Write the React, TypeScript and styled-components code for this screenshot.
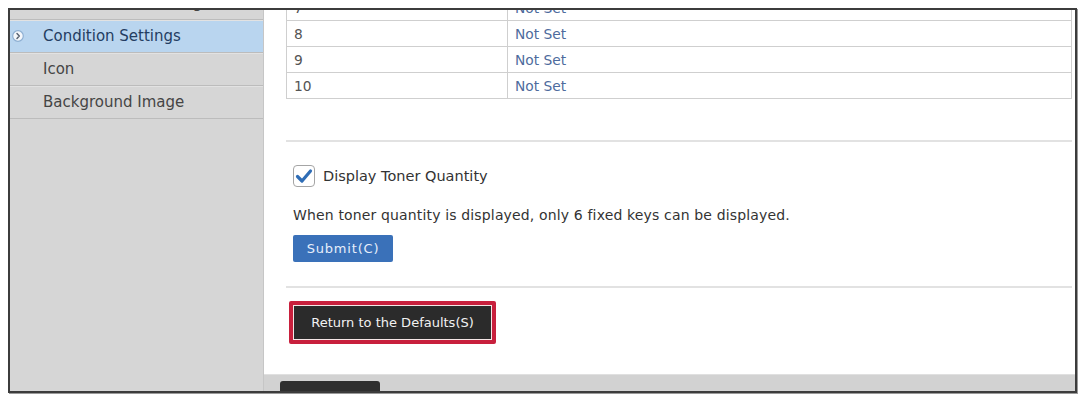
import React from "react";
import styled, { createGlobalStyle } from "styled-components";

const Global = createGlobalStyle`
  html, body { margin: 0; padding: 0; background: #ffffff; }
  body { font-family: "DejaVu Sans", Verdana, sans-serif; }
`;

const Page = styled.div`
  padding: 8px 0 0 8px;
  width: 1079px;
  height: 396px;
  box-sizing: border-box;
  overflow: hidden;
`;

const Frame = styled.div`
  width: 1069px;
  height: 385px;
  box-sizing: border-box;
  border: 2px solid #3c3c3c;
  display: flex;
  overflow: hidden;
  box-shadow: 1px 1px 0 #9a9a9a;
`;

const Sidebar = styled.nav`
  width: 254px;
  flex: none;
  background: #d6d6d6;
  border-right: 1px solid #c6c6c6;
  box-sizing: border-box;
  overflow: hidden;
  display: flex;
  flex-direction: column;
`;

const SideItem = styled.div<{ $active?: boolean }>`
  height: 33px;
  flex: none;
  box-sizing: border-box;
  display: flex;
  align-items: center;
  border-bottom: 1px solid #bcbcbc;
  box-shadow: inset 0 1px 0 #e2e2e2;
  background: ${(p) => (p.$active ? "#b9d5ef" : "transparent")};
  color: ${(p) => (p.$active ? "#243d62" : "#454545")};
  font-size: 15px;
  line-height: 18px;
`;

const ScrolledItem = styled(SideItem)`
  margin-top: -23px;
  align-items: flex-start;
  padding-top: 7px;
`;

const IconSlot = styled.span`
  width: 33px;
  flex: none;
  display: flex;
  align-items: center;
  padding-left: 2px;
  box-sizing: border-box;
`;

const Main = styled.main`
  flex: 1;
  background: #ffffff;
  display: flex;
  flex-direction: column;
  overflow: hidden;
`;

const Content = styled.div`
  padding: 0 3px 0 22px;
  display: flex;
  flex-direction: column;
`;

const Table = styled.table`
  border-collapse: collapse;
  width: 100%;
  margin-top: -16px;
  font-size: 13.8px;
`;

const Cell = styled.td<{ $value?: boolean }>`
  height: 25px;
  padding: 0 0 0 7px;
  border: 1px solid #cfcfcf;
  color: ${(p) => (p.$value ? "#4e6b9d" : "#555555")};
  width: ${(p) => (p.$value ? "auto" : "213px")};
  vertical-align: middle;
`;

const Rule = styled.hr<{ $gap: number }>`
  border: none;
  border-top: 2px solid #e2e2e2;
  margin: ${(p) => p.$gap}px 0 0 0;
  height: 0;
`;

const Options = styled.div`
  padding-left: 7px;
  display: flex;
  flex-direction: column;
  align-items: flex-start;
`;

const CheckRow = styled.label`
  margin-top: 23px;
  display: flex;
  align-items: center;
  gap: 8px;
  font-size: 14.5px;
  color: #333333;
`;

const CheckBox = styled.span`
  width: 22px;
  height: 22px;
  box-sizing: border-box;
  border: 1px solid #a5a5a5;
  border-radius: 4px;
  background: #ffffff;
  display: flex;
  align-items: center;
  justify-content: center;
`;

const Note = styled.p`
  margin: 19px 0 0 0;
  font-size: 14px;
  letter-spacing: 0.15px;
  line-height: 18px;
  color: #333333;
`;

const SubmitButton = styled.button`
  margin-top: 11px;
  width: 100px;
  height: 27px;
  border: none;
  border-radius: 2px;
  background: #3a71b9;
  color: #e6eefb;
  font-family: "DejaVu Sans", Verdana, sans-serif;
  font-size: 13px;
  letter-spacing: 0.8px;
  padding: 0;
`;

const Highlight = styled.div`
  margin: 13px 0 0 3px;
  align-self: flex-start;
  border: 4px solid #c8203d;
  border-radius: 2px;
  padding: 1px;
  background: #f4e6e6;
`;

const DarkButton = styled.button`
  display: block;
  width: 197px;
  height: 33px;
  border: none;
  background: #2b2b2b;
  color: #f2f2f2;
  font-family: "DejaVu Sans", Verdana, sans-serif;
  font-size: 13px;
  font-weight: 500;
  padding: 0;
`;

const BottomBar = styled.div`
  margin-top: auto;
  height: 16px;
  background: #d2d2d2;
  border-top: 1px solid #e0e0e0;
  display: flex;
  align-items: flex-end;
  padding-left: 16px;
`;

const BarTab = styled.div`
  width: 100px;
  height: 10px;
  background: #2f2f2f;
  border-radius: 3px 3px 0 0;
`;

const Chevron = () => (
  <svg width="12" height="12" viewBox="0 0 12 12">
    <circle cx="6" cy="6" r="5.3" fill="#f4f7fb" stroke="#8fb0d3" strokeWidth="1.2" />
    <path d="M5 3.6 L7.3 6 L5 8.4" fill="none" stroke="#5a6472" strokeWidth="1.5" strokeLinecap="round" strokeLinejoin="round" />
  </svg>
);

const Check = () => (
  <svg width="18" height="16" viewBox="0 0 18 16">
    <path d="M2.5 8.5 L7 13 L15.5 3" fill="none" stroke="#2f6db6" strokeWidth="3.2" strokeLinecap="round" strokeLinejoin="round" />
  </svg>
);

const rows = [
  ["7", "Not Set"],
  ["8", "Not Set"],
  ["9", "Not Set"],
  ["10", "Not Set"],
];

export default function App() {
  return (
    <>
      <Global />
      <Page>
        <Frame>
          <Sidebar>
            <ScrolledItem>
              <IconSlot />
              Home Screen Setting
            </ScrolledItem>
            <SideItem $active>
              <IconSlot>
                <Chevron />
              </IconSlot>
              Condition Settings
            </SideItem>
            <SideItem>
              <IconSlot />
              Icon
            </SideItem>
            <SideItem>
              <IconSlot />
              Background Image
            </SideItem>
          </Sidebar>
          <Main>
            <Content>
              <Table>
                <tbody>
                  {rows.map(([k, v]) => (
                    <tr key={k}>
                      <Cell>{k}</Cell>
                      <Cell $value>{v}</Cell>
                    </tr>
                  ))}
                </tbody>
              </Table>
              <Rule $gap={41} />
              <Options>
                <CheckRow>
                  <CheckBox>
                    <Check />
                  </CheckBox>
                  Display Toner Quantity
                </CheckRow>
                <Note>When toner quantity is displayed, only 6 fixed keys can be displayed.</Note>
                <SubmitButton>Submit(C)</SubmitButton>
              </Options>
              <Rule $gap={24} />
              <Highlight>
                <DarkButton>Return to the Defaults(S)</DarkButton>
              </Highlight>
            </Content>
            <BottomBar>
              <BarTab />
            </BottomBar>
          </Main>
        </Frame>
      </Page>
    </>
  );
}
